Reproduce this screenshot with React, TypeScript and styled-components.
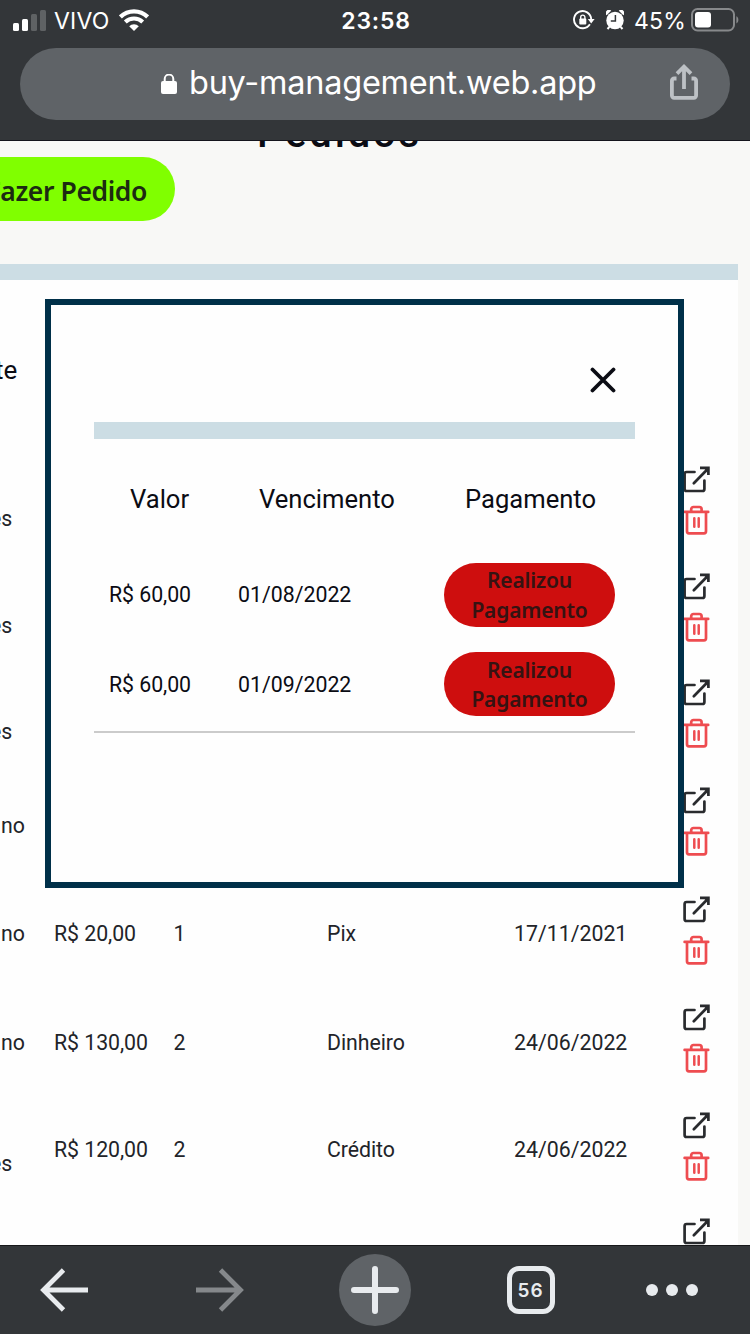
import React from "react";
import styled, { createGlobalStyle } from "styled-components";

const GlobalStyle = createGlobalStyle`
  * { box-sizing: border-box; }
  body { margin: 0; overflow: hidden; }
  button { border: 0; padding: 0; background: none; font: inherit; color: inherit; }
  svg { display: block; flex: none; }
`;

const Screen = styled.div`
  display: flex;
  flex-direction: column;
  width: 750px;
  height: 1334px;
  overflow: hidden;
  background: #f8f8f6;
  font-family: Roboto, "Liberation Sans", sans-serif;
`;

/* ---------- browser chrome ---------- */

const BrowserHeader = styled.header`
  flex: none;
  height: 141px;
  background: #333639;
  border-bottom: 1px solid #14141c;
  color: #fff;
  font-family: Inter, "Liberation Sans", sans-serif;
`;

const StatusBar = styled.div`
  display: grid;
  grid-template-columns: 1fr auto 1fr;
  align-items: center;
  height: 40px;
  padding: 0 11px 0 13px;
  font-size: 22px;
`;

const StatusGroup = styled.div<{ $end?: boolean }>`
  display: flex;
  align-items: center;
  justify-content: ${(p) => (p.$end ? "flex-end" : "flex-start")};
`;

const Carrier = styled.span`
  margin: 2px 9px 0 8px;
  font-size: 23px;
  letter-spacing: 0.2px;
`;

const Clock = styled.time`
  padding-top: 2px;
  font-size: 23px;
  font-weight: 600;
  letter-spacing: 0.8px;
`;

const BatteryLevel = styled.span`
  margin: 2px 5px 0 10px;
  font-size: 23px;
  letter-spacing: 0.2px;
`;

const StatusIcons = styled.div`
  display: flex;
  align-items: center;
  gap: 11px;
`;

const AddressBar = styled.div`
  display: flex;
  align-items: center;
  height: 72px;
  margin: 8px 20px 0;
  padding: 0 32px 0 141px;
  border-radius: 36px;
  background: #5f6367;
`;

const Url = styled.span`
  flex: 1;
  margin-left: 12px;
  padding-bottom: 3px;
  font-size: 32.5px;
  letter-spacing: -0.25px;
  white-space: nowrap;
`;

const ShareButton = styled.button`
  padding-bottom: 4px;
`;

const BrowserFooter = styled.footer`
  display: grid;
  grid-template-columns: 128px 183px 128px 183px 100px;
  align-items: center;
  justify-items: center;
  flex: none;
  height: 89px;
  border-top: 1px solid #17181a;
  background: #333639;
  color: #e8ebee;
`;

const NewTab = styled.button`
  display: grid;
  place-items: center;
  width: 72px;
  height: 72px;
  border-radius: 50%;
  background: #5f6367;
`;

const TabCount = styled.button`
  display: grid;
  place-items: center;
  width: 48px;
  height: 48px;
  border: 5px solid #e8ebee;
  border-radius: 12px;
  font: 600 19px Inter, "Liberation Sans", sans-serif;
  letter-spacing: 1px;
`;

/* ---------- page ---------- */

const Page = styled.main`
  position: relative;
  flex: 1;
  min-height: 0;
  overflow: hidden;
  color: #222429;
`;

const PageTop = styled.section`
  height: 123px;
`;

const TitleBox = styled.div`
  display: flex;
  align-items: flex-end;
  height: 16px;
  padding-left: 257px;
`;

const Title = styled.h1`
  margin: 0;
  color: #0b0c14;
  font: 500 40px/47px Roboto, sans-serif;
  letter-spacing: 2.8px;
`;

const OrderButton = styled.button`
  display: flex;
  align-items: center;
  justify-content: flex-end;
  width: 215px;
  height: 64px;
  margin-left: -40px;
  padding: 3px 28px 0 0;
  border-radius: 32px;
  background: #80ff00;
  color: #1c2b12;
  font: 600 26.5px "Noto Sans", sans-serif;
  letter-spacing: -0.4px;
  white-space: nowrap;
`;

const Accent = styled.div<{ $height: number }>`
  height: ${(p) => p.$height}px;
  background: #ccdde4;
`;

const Orders = styled.section`
  width: 738px;
  background: #fefefe;
`;

const OrdersHeading = styled.div`
  display: flex;
  align-items: center;
  height: 170px;
  padding-top: 10px;
  font-size: 26px;
  color: #0b0c14;
`;

const HeadingLabel = styled.span`
  margin-left: -5px;
`;

const OrderRow = styled.div<{ $height: number }>`
  display: grid;
  grid-template-columns: 54px 119.5px 153.5px 187px 168px 1fr;
  align-items: center;
  height: ${(p) => p.$height}px;
  font-size: 21.3px;
  letter-spacing: -0.05px;
  white-space: nowrap;
`;

const Name = styled.span<{ $wrapped: boolean }>`
  margin-left: ${(p) => (p.$wrapped ? "-10px" : "1px")};
  padding-top: ${(p) => (p.$wrapped ? "28px" : "0")};
`;

const DateText = styled.span`
  letter-spacing: 0;
`;

const Actions = styled.div`
  display: flex;
  flex-direction: column;
  gap: 11px;
  margin: -7px 0 0 0.5px;
`;

/* ---------- modal ---------- */

const Modal = styled.div`
  position: absolute;
  top: 158px;
  left: 45px;
  width: 639px;
  height: 589px;
  padding: 0 43px;
  border: 6px solid #003049;
  background: #fefefe;
  color: #0b0c14;
`;

const ModalTop = styled.div`
  display: flex;
  align-items: flex-end;
  justify-content: flex-end;
  height: 117.4px;
  padding: 0 19px 29.4px 0;
`;

const Payments = styled.div`
  border-bottom: 2px solid #cbcbcb;
  height: 294px;
`;

const PaymentsHead = styled.div`
  display: grid;
  grid-template-columns: 129px 206px 1fr;
  align-items: center;
  height: 119.5px;
  padding-left: 36px;
  font-size: 25.6px;
  letter-spacing: 0;
`;

const PaymentRow = styled.div`
  display: grid;
  grid-template-columns: 129px 206px 171px;
  align-items: center;
  height: 64px;
  margin: 4px 0 25.5px 15px;
  font-size: 21.3px;
  letter-spacing: -0.05px;

  & + & {
    margin-top: 0;
  }
`;

const PaidButton = styled.button`
  height: 64px;
  padding-top: 2px;
  border-radius: 32px;
  background: #ce0e0e;
  color: #351312;
  font: 600 21px/29.5px "Noto Sans", sans-serif;
  letter-spacing: -0.2px;
`;

const orders = [
  { name: "es", wrapped: true, height: 108 },
  { name: "es", wrapped: true, height: 106 },
  { name: "es", wrapped: true, height: 106 },
  { name: "no", wrapped: false, height: 110 },
  { name: "no", wrapped: false, height: 107, value: "R$ 20,00", parts: 1, method: "Pix", date: "17/11/2021" },
  { name: "no", wrapped: false, height: 110, value: "R$ 130,00", parts: 2, method: "Dinheiro", date: "24/06/2022" },
  { name: "es", wrapped: true, height: 105, value: "R$ 120,00", parts: 2, method: "Crédito", date: "24/06/2022" },
  { name: "", wrapped: false, height: 107 },
];

const payments = [
  { value: "R$ 60,00", due: "01/08/2022" },
  { value: "R$ 60,00", due: "01/09/2022" },
];

const SignalIcon = () => (
  <svg width="33" height="21" viewBox="0 0 33 21" fill="#fff">
    <rect x="0" y="13" width="6" height="8" rx="1.5" />
    <rect x="9" y="9" width="6" height="12" rx="1.5" />
    <g fill="#5f6264">
      <rect x="18" y="4" width="6" height="17" rx="1.5" />
      <rect x="27" y="0" width="6" height="21" rx="1.5" />
    </g>
  </svg>
);

const WifiIcon = () => (
  <svg width="30" height="22" viewBox="0 0 30 22" fill="none" stroke="#fff">
    <path d="M1.4 7.9A19.4 19.4 0 0 1 28.6 7.9" strokeWidth="4.2" />
    <path d="M6.3 13A12.4 12.4 0 0 1 23.7 13" strokeWidth="4" />
    <path d="M10.2 17.2a6.8 6.8 0 0 1 9.6 0L15 22z" fill="#fff" stroke="none" />
  </svg>
);

const RotationLockIcon = () => (
  <svg width="22" height="20" viewBox="0 0 22 20" fill="none" stroke="#fff" strokeWidth="1.9">
    <path d="M16.9 14.2A8.6 8.6 0 1 1 18.2 9" />
    <path d="M14.8 9H21.6L18.2 13.6z" fill="#fff" stroke="none" />
    <rect x="6.3" y="8.6" width="7" height="6" rx="1" fill="#fff" stroke="none" />
    <path d="M7.7 9V7.2a2.1 2.1 0 0 1 4.2 0V9" strokeWidth="1.4" />
  </svg>
);

const AlarmIcon = () => (
  <svg width="18" height="20" viewBox="0 0 18 20">
    <circle cx="9" cy="10.5" r="8.7" fill="#fff" />
    <path d="M.6 5.2A3 3 0 0 1 5.2.8M17.4 5.2A3 3 0 0 0 12.8.8" fill="#fff" />
    <path d="M3.4 16.8 1.5 19M14.6 16.8l1.9 2.2" stroke="#fff" strokeWidth="2" />
    <path d="M9.4 5v6H4.8" fill="none" stroke="#333639" strokeWidth="1.5" />
  </svg>
);

const BatteryIcon = () => (
  <svg width="48" height="24" viewBox="0 0 48 24">
    <rect x="1" y="1" width="42" height="21.5" rx="5.5" fill="none" stroke="#87898b" strokeWidth="2" />
    <rect x="4" y="4" width="16" height="15.5" rx="3" fill="#fff" />
    <path d="M45.4 8.2c2.6 1.2 2.6 6 0 7.2z" fill="#87898b" />
  </svg>
);

const LockIcon = () => (
  <svg width="16" height="21" viewBox="0 0 16 21">
    <rect y="7" width="16" height="13" rx="2" fill="#fff" />
    <path d="M3.7 8V4.900a4.300 4.300 0 0 1 8.600 0V8" fill="none" stroke="#fff" strokeWidth="2" />
  </svg>
);

const ShareIcon = () => (
  <svg width="28" height="36" viewBox="0 0 28 36" fill="none" stroke="#bdc1c5" strokeWidth="3.8">
    <path d="M6.5 14.5H4.2a2.3 2.3 0 0 0-2.3 2.3v14.8a2.3 2.3 0 0 0 2.3 2.3h19.6a2.3 2.3 0 0 0 2.3-2.3V16.8a2.3 2.3 0 0 0-2.3-2.3h-2.3" />
    <path d="M14 25V3.5M7 9.7l7-7 7 7" />
  </svg>
);

const CloseIcon = () => (
  <svg width="26" height="26" viewBox="0 0 26 26" stroke="#0b0c14" strokeWidth="3.8" strokeLinecap="round">
    <path d="M2.5 2.5l21 21M23.5 2.5l-21 21" />
  </svg>
);

const OpenIcon = () => (
  <svg width="28" height="28" viewBox="0 0 28 28" fill="none" stroke="#292b2e" strokeWidth="2.7" strokeLinecap="round">
    <path d="M11.5 6H3.6a2 2 0 0 0-2 2v15a2 2 0 0 0 2 2h15.8a2 2 0 0 0 2-2v-8.5" strokeLinejoin="round" />
    <path d="M10.8 17.2 24.5 3.2" />
    <path d="M17 1.9h8.400v7" strokeLinecap="butt" />
    <path d="M20.5 2h5v5z" fill="#292b2e" stroke="none" />
  </svg>
);

const TrashIcon = () => (
  <svg width="28" height="30" viewBox="0 0 28 30" fill="none" stroke="#ee4c50" strokeWidth="2.7" strokeLinecap="round" strokeLinejoin="round">
    <path d="M1.6 6.9h23.6M4 6.900v19.400a2 2 0 0 0 2 2h15a2 2 0 0 0 2-2V6.900" />
    <path d="M8.2 6.500V4.200a2.200 2.200 0 0 1 2.200-2.200h6a2.200 2.200 0 0 1 2.200 2.200v2.300" />
    <path d="M11.3 13.300v8.500M15.700 13.300v8.500" strokeWidth="2.5" />
  </svg>
);

const ArrowIcon = ({ forward = false }: { forward?: boolean }) => (
  <svg width="48" height="44" viewBox="0 0 48 44" fill="none" stroke={forward ? "#85888b" : "#e8ebee"} strokeWidth="4.8">
    {forward ? <path d="M0 22h44M24.5 2l20 20-20 20" /> : <path d="M48 22H4M23.5 2l-20 20 20 20" />}
  </svg>
);

const PlusIcon = () => (
  <svg width="48" height="48" viewBox="0 0 48 48" stroke="#e8ebee" strokeWidth="6" strokeLinecap="round">
    <path d="M24 3v42M3 24h42" />
  </svg>
);

const MoreIcon = () => (
  <svg width="52" height="12" viewBox="0 0 52 12" fill="#e8ebee">
    <circle cx="6" cy="6" r="6" />
    <circle cx="26" cy="6" r="6" />
    <circle cx="46" cy="6" r="6" />
  </svg>
);

export default function App() {
  return (
    <Screen>
      <GlobalStyle />
      <BrowserHeader>
        <StatusBar>
          <StatusGroup>
            <SignalIcon />
            <Carrier>VIVO</Carrier>
            <WifiIcon />
          </StatusGroup>
          <Clock>23:58</Clock>
          <StatusGroup $end>
            <StatusIcons>
              <RotationLockIcon />
              <AlarmIcon />
            </StatusIcons>
            <BatteryLevel>45%</BatteryLevel>
            <BatteryIcon />
          </StatusGroup>
        </StatusBar>
        <AddressBar>
          <LockIcon />
          <Url>buy-management.web.app</Url>
          <ShareButton aria-label="Compartilhar">
            <ShareIcon />
          </ShareButton>
        </AddressBar>
      </BrowserHeader>

      <Page>
        <PageTop>
          <TitleBox>
            <Title>Pedidos</Title>
          </TitleBox>
          <OrderButton>Fazer Pedido</OrderButton>
        </PageTop>
        <Orders>
          <Accent $height={16} />
          <OrdersHeading>
            <HeadingLabel>te</HeadingLabel>
          </OrdersHeading>
          {orders.map((order, i) => (
            <OrderRow key={i} $height={order.height}>
              <Name $wrapped={order.wrapped}>{order.name}</Name>
              <span>{order.value}</span>
              <span>{order.parts}</span>
              <span>{order.method}</span>
              <DateText>{order.date}</DateText>
              <Actions>
                <OpenIcon />
                <TrashIcon />
              </Actions>
            </OrderRow>
          ))}
        </Orders>

        <Modal role="dialog">
          <ModalTop>
            <button aria-label="Fechar">
              <CloseIcon />
            </button>
          </ModalTop>
          <Accent $height={17} />
          <Payments>
            <PaymentsHead>
              <span>Valor</span>
              <span>Vencimento</span>
              <span>Pagamento</span>
            </PaymentsHead>
            {payments.map((payment) => (
              <PaymentRow key={payment.due}>
                <span>{payment.value}</span>
                <DateText>{payment.due}</DateText>
                <PaidButton>
                  Realizou
                  <br />
                  Pagamento
                </PaidButton>
              </PaymentRow>
            ))}
          </Payments>
        </Modal>
      </Page>

      <BrowserFooter>
        <ArrowIcon />
        <ArrowIcon forward />
        <NewTab aria-label="Nova guia">
          <PlusIcon />
        </NewTab>
        <TabCount>56</TabCount>
        <MoreIcon />
      </BrowserFooter>
    </Screen>
  );
}
